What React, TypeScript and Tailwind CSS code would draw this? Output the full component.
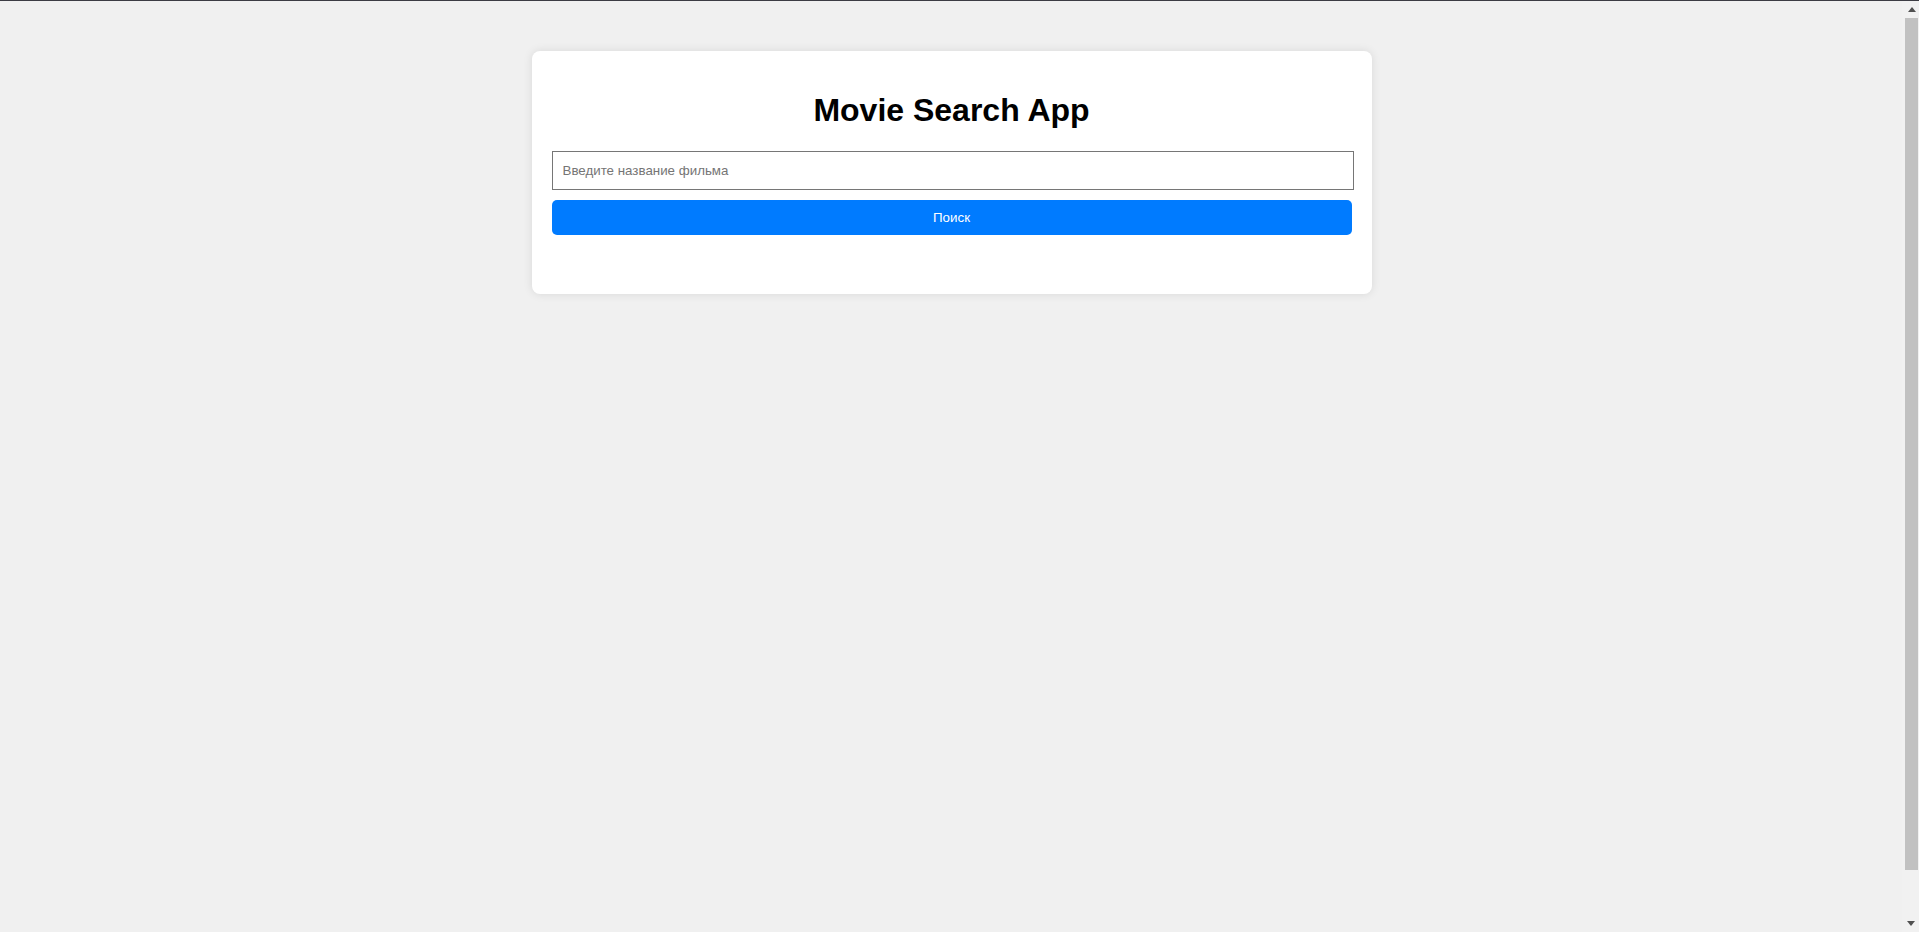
import React, { useState } from "react";

function Scrollbar() {
  return (
    <div className="w-[17px] h-full flex flex-col bg-[#f1f1f1]">
      <div className="h-[16px] flex items-start justify-center pt-[6px] pl-[2px]">
        <svg width="8" height="5" viewBox="0 0 8 5">
          <polygon points="4,0 8,5 0,5" fill="#505050" />
        </svg>
      </div>
      <div className="flex-1 flex flex-col pl-[3px] pr-[1px]">
        <div className="mt-[1px] h-[852px] bg-[#c1c1c1]" />
      </div>
      <div className="h-[16px] flex items-start justify-center pt-[5px] pl-[1px]">
        <svg width="8" height="5" viewBox="0 0 8 5">
          <polygon points="0,0 8,0 4,5" fill="#505050" />
        </svg>
      </div>
    </div>
  );
}

export default function App() {
  const [query, setQuery] = useState("");
  return (
    <div
      className="h-[932px] overflow-hidden flex bg-[#f0f0f0] border-t border-[#3c3c44]"
      style={{ fontFamily: '"Liberation Sans", Arial, sans-serif' }}
    >
      <main className="flex-1 pt-[50px] pl-[1px]">
        <div className="mx-auto w-[840px] bg-white rounded-[8px] shadow-[0_0_10px_rgba(0,0,0,0.1)] px-[20px] pt-[20px] pb-[59px]">
          <h1 className="text-[32px] leading-[37px] font-bold text-center text-black mt-[21px] mb-[22px]">
            Movie Search App
          </h1>
          <input
            type="text"
            value={query}
            onChange={(e) => setQuery(e.target.value)}
            placeholder="Введите название фильма"
            className="block w-[802px] h-[39px] px-[10px] border border-[#767676] text-[13.33px] text-black placeholder:text-[#757575] bg-white outline-none"
          />
          <button
            type="button"
            className="block w-full h-[35px] mt-[10px] bg-[#007bff] text-white text-[13.33px] rounded-[5px]"
          >
            Поиск
          </button>
        </div>
      </main>
      <Scrollbar />
    </div>
  );
}
